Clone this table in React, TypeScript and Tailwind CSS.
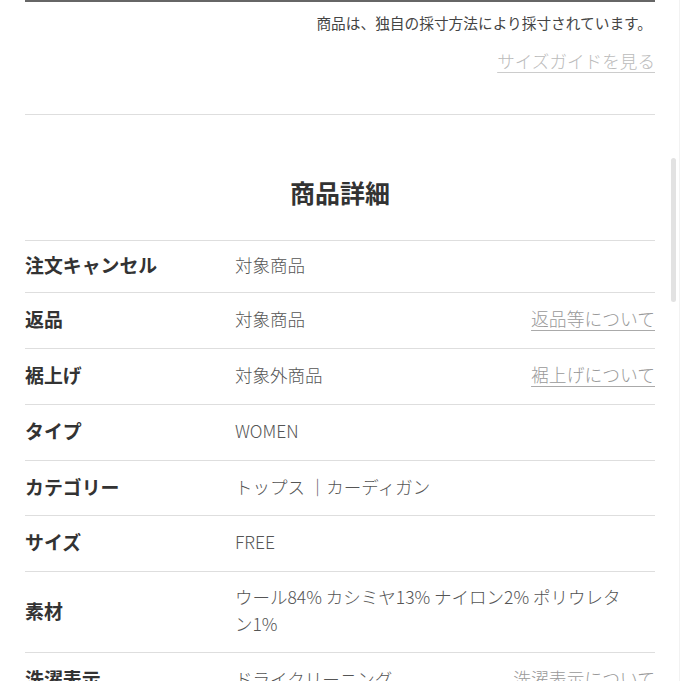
const rows: { label: string; value: string[]; link?: string; pad: string }[] = [
  { label: "注文キャンセル", value: ["対象商品"], pad: "pt-[10px] pb-[14px]" },
  { label: "返品", value: ["対象商品"], link: "返品等について", pad: "pt-[12px] pb-[16px]" },
  { label: "裾上げ", value: ["対象外商品"], link: "裾上げについて", pad: "pt-[12px] pb-[16px]" },
  { label: "タイプ", value: ["WOMEN"], pad: "pt-[12px] pb-[16px]" },
  { label: "カテゴリー", value: ["トップス ｜カーディガン"], pad: "pt-[12px] pb-[15px]" },
  { label: "サイズ", value: ["FREE"], pad: "pt-[12px] pb-[16px]" },
  {
    label: "素材",
    value: ["ウール84% カシミヤ13% ナイロン2% ポリウレタ", "ン1%"],
    pad: "pt-[11px] pb-[15px]",
  },
  { label: "洗濯表示", value: ["ドライクリーニング"], link: "洗濯表示について", pad: "pt-[12px] pb-[16px]" },
];

export default function App() {
  return (
    <div
      className="relative h-[681px] w-[681px] overflow-hidden bg-white"
      style={{ fontFamily: '"Noto Sans CJK JP", "Noto Sans", sans-serif' }}
    >
      <div className="ml-[25px] w-[630px]">
        <div className="h-[2px] bg-[#666]" />
        <p className="mt-[11px] pr-[3px] text-right text-[14.7px] leading-[20px] text-[#444]">
          商品は、独自の採寸方法により採寸されています。
        </p>
        <div className="mt-[15px] flex justify-end">
          <a className="text-[17.6px] leading-[26px] font-light text-[#bbb] underline decoration-[#ccc] underline-offset-[4px]">
            サイズガイドを見る
          </a>
        </div>
        <div className="mt-[40px] border-t border-[#dedede]" />
        <h2 className="mt-[60px] text-center text-[25px] leading-[34px] font-bold text-[#333]">
          商品詳細
        </h2>
        <div className="mt-[31px] border-t border-[#dedede]">
          {rows.map((r) => (
            <div key={r.label} className={"flex items-center border-b border-[#dedede] " + r.pad}>
              <div className="w-[210px] shrink-0 text-[18.9px] leading-[27px] font-bold text-[#333]">
                {r.label}
              </div>
              <div className="flex-1 text-[17.5px] leading-[27px] font-light text-[#555]">
                {r.value.map((v) => (
                  <div key={v}>{v}</div>
                ))}
              </div>
              {r.link && (
                <a className="text-[17.8px] leading-[27px] font-light text-[#999] underline decoration-[#aaa] underline-offset-[4px]">
                  {r.link}
                </a>
              )}
            </div>
          ))}
        </div>
      </div>
      <div className="absolute left-[671px] top-[158px] h-[144px] w-[5px] rounded-full bg-[#e2e2e2]" />
      <div className="absolute left-[679px] top-0 h-full w-px bg-[#f2f2f2]" />
    </div>
  );
}
